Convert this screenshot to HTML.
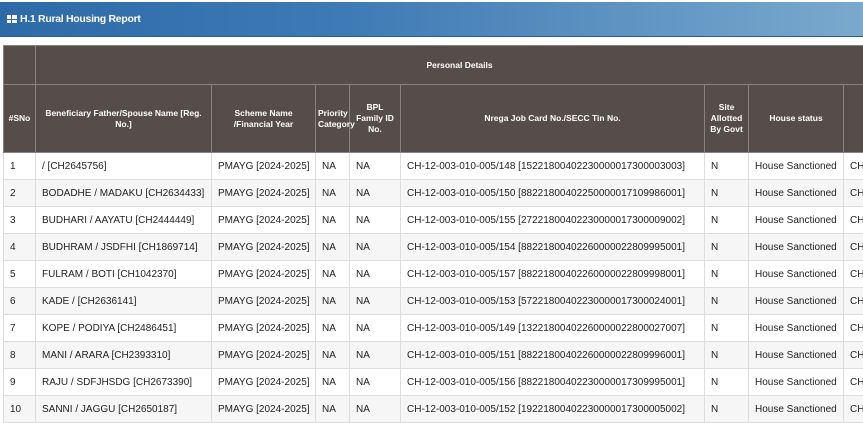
<!DOCTYPE html>
<html><head><style>
body{margin:0;width:863px;height:421px;overflow:hidden;background:#fff;font-family:"Liberation Sans",sans-serif;}
.bar{position:absolute;left:0;top:2px;width:863px;height:34px;background:linear-gradient(90deg,#2d6aa8 0%,#3e7ab5 40%,#7aa9cd 100%);border-bottom:1px solid #2a5f95;}
.bar span{position:absolute;left:7px;top:11px;color:#fff;font-weight:bold;font-size:10.5px;letter-spacing:-0.3px;}
.ic{display:inline-block;width:10px;height:8px;background:#fff;vertical-align:-1px;margin-right:3px;position:relative;}
.ic:before{content:"";position:absolute;left:4px;top:0;width:1px;height:8px;background:#2d6aa8}
.ic:after{content:"";position:absolute;left:0;top:3.5px;width:10px;height:1px;background:#2d6aa8}
table{position:absolute;left:3px;top:45px;border-collapse:collapse;table-layout:fixed;width:880px;}
th{background:#564d4a;color:#fff;font-size:8.5px;font-weight:bold;border:1px solid #8a817e;padding:0 2px;text-align:center;line-height:11px;}
td{font-size:10px;color:#222;border:1px solid #ddd;height:26px;padding:0 0 0 6px;white-space:nowrap;overflow:hidden;}
tr:nth-child(even) td{background:#f6f6f6}
</style></head><body>
<div class="bar"><span><i class="ic"></i>H.1 Rural Housing Report</span></div>
<table>
<colgroup><col style="width:32px"><col style="width:176px"><col style="width:104px"><col style="width:34px"><col style="width:51px"><col style="width:304px"><col style="width:44px"><col style="width:95px"><col style="width:40px"></colgroup>
<tr style="height:39px"><th></th><th colspan="8">Personal Details</th></tr>
<tr style="height:68px"><th>#SNo</th><th>Beneficiary Father/Spouse Name [Reg. No.]</th><th>Scheme Name /Financial Year</th><th>Priority Category</th><th>BPL Family ID No.</th><th>Nrega Job Card No./SECC Tin No.</th><th>Site Allotted By Govt</th><th>House status</th><th></th></tr>
<tr><td>1</td><td>/ [CH2645756]</td><td>PMAYG [2024-2025]</td><td>NA</td><td>NA</td><td>CH-12-003-010-005/148 [15221800402230000017300003003]</td><td>N</td><td>House Sanctioned</td><td>CH</td></tr>
<tr><td>2</td><td>BODADHE / MADAKU [CH2634433]</td><td>PMAYG [2024-2025]</td><td>NA</td><td>NA</td><td>CH-12-003-010-005/150 [88221800402250000017109986001]</td><td>N</td><td>House Sanctioned</td><td>CH</td></tr>
<tr><td>3</td><td>BUDHARI / AAYATU [CH2444449]</td><td>PMAYG [2024-2025]</td><td>NA</td><td>NA</td><td>CH-12-003-010-005/155 [27221800402230000017300009002]</td><td>N</td><td>House Sanctioned</td><td>CH</td></tr>
<tr><td>4</td><td>BUDHRAM / JSDFHI [CH1869714]</td><td>PMAYG [2024-2025]</td><td>NA</td><td>NA</td><td>CH-12-003-010-005/154 [88221800402260000022809995001]</td><td>N</td><td>House Sanctioned</td><td>CH</td></tr>
<tr><td>5</td><td>FULRAM / BOTI [CH1042370]</td><td>PMAYG [2024-2025]</td><td>NA</td><td>NA</td><td>CH-12-003-010-005/157 [88221800402260000022809998001]</td><td>N</td><td>House Sanctioned</td><td>CH</td></tr>
<tr><td>6</td><td>KADE / [CH2636141]</td><td>PMAYG [2024-2025]</td><td>NA</td><td>NA</td><td>CH-12-003-010-005/153 [57221800402230000017300024001]</td><td>N</td><td>House Sanctioned</td><td>CH</td></tr>
<tr><td>7</td><td>KOPE / PODIYA [CH2486451]</td><td>PMAYG [2024-2025]</td><td>NA</td><td>NA</td><td>CH-12-003-010-005/149 [13221800402260000022800027007]</td><td>N</td><td>House Sanctioned</td><td>CH</td></tr>
<tr><td>8</td><td>MANI / ARARA [CH2393310]</td><td>PMAYG [2024-2025]</td><td>NA</td><td>NA</td><td>CH-12-003-010-005/151 [88221800402260000022809996001]</td><td>N</td><td>House Sanctioned</td><td>CH</td></tr>
<tr><td>9</td><td>RAJU / SDFJHSDG [CH2673390]</td><td>PMAYG [2024-2025]</td><td>NA</td><td>NA</td><td>CH-12-003-010-005/156 [88221800402230000017309995001]</td><td>N</td><td>House Sanctioned</td><td>CH</td></tr>
<tr><td>10</td><td>SANNI / JAGGU [CH2650187]</td><td>PMAYG [2024-2025]</td><td>NA</td><td>NA</td><td>CH-12-003-010-005/152 [19221800402230000017300005002]</td><td>N</td><td>House Sanctioned</td><td>CH</td></tr>
</table>
</body></html>
